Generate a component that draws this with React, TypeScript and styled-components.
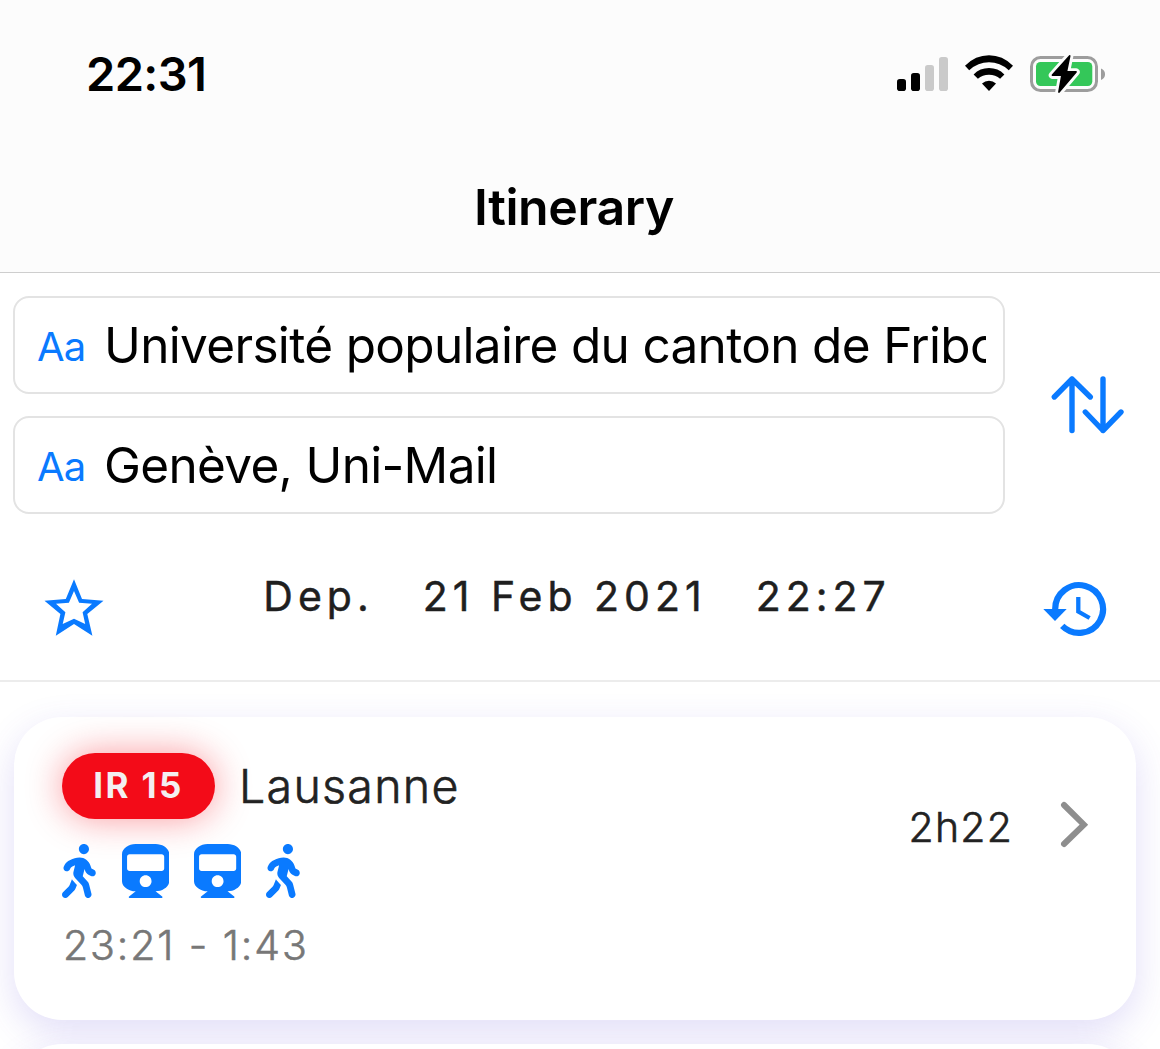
import React from "react";
import styled, { createGlobalStyle } from "styled-components";
import { FaWalking, FaTrain } from "react-icons/fa";

const blue = "#0a7aff";

const GlobalStyle = createGlobalStyle`
  * { box-sizing: border-box; }
  html, body { margin: 0; padding: 0; background: #fff; }
  body { font-family: Inter, "Liberation Sans", sans-serif; color: #000; }
  svg { display: block; flex: none; }
`;

const Screen = styled.div`
  width: 1160px;
  height: 1049px;
  overflow: hidden;
  display: flex;
  flex-direction: column;
  background: #fff;
`;

const Header = styled.header`
  height: 273px;
  flex: none;
  background: #fcfcfc;
  border-bottom: 1px solid #cecece;
`;

const StatusBar = styled.div`
  height: 148px;
  display: flex;
  justify-content: space-between;
  align-items: center;
  padding: 0 53px 0 86px;
`;

const Text = styled.span<{ $size: number; $weight?: number; $spacing?: number; $color?: string; $stroke?: number }>`
  font-size: ${(p) => p.$size}px;
  font-weight: ${(p) => p.$weight ?? 400};
  letter-spacing: ${(p) => p.$spacing ?? 0}px;
  color: ${(p) => p.$color ?? "#000"};
  -webkit-text-stroke: ${(p) => p.$stroke ?? 0}px currentColor;
  line-height: 1.2;
  white-space: pre;
`;

const Title = styled.h1`
  margin: 27px 12px 0 0;
  text-align: center;
  font-size: 50px;
  line-height: 64px;
  font-weight: 600;
  letter-spacing: -0.4px;
`;

const SearchPanel = styled.section`
  height: 409px;
  flex: none;
  padding: 23px 0 0 13px;
  border-bottom: 2px solid #ececec;
`;

const RouteRow = styled.div`
  display: flex;
`;

const Fields = styled.div`
  width: 992px;
  display: flex;
  flex-direction: column;
  gap: 22px;
`;

const Field = styled.div`
  height: 98px;
  border: 2px solid #e3e3e3;
  border-radius: 16px;
  display: flex;
  align-items: center;
  padding: 1px 17px 0 22px;
`;

const FieldMark = styled.span`
  width: 67px;
  flex: none;
  padding-top: 2px;
  color: ${blue};
  font-size: 40px;
  line-height: 48px;
  letter-spacing: -0.8px;
`;

const FieldValue = styled.span`
  flex: 1;
  overflow: hidden;
  white-space: nowrap;
  font-size: 49.5px;
  line-height: 62px;
  padding-bottom: 1px;
  letter-spacing: -0.67px;
`;

const SwapButton = styled.div`
  flex: 1;
  display: flex;
  align-items: center;
  padding-left: 45px;
`;

const TimeRow = styled.div`
  display: flex;
  justify-content: space-between;
  align-items: flex-start;
  padding: 58px 52px 0 30px;
`;

const TimeValues = styled.div`
  display: flex;
  gap: 49px;
  padding-left: 7px;
`;

const IconButton = styled.div<{ $drop: number }>`
  padding-top: ${(p) => p.$drop}px;
`;

const Results = styled.main`
  flex: 1;
  display: flex;
  flex-direction: column;
  gap: 24px;
  padding: 35px 24px 0 14px;
`;

const Card = styled.article`
  height: 303px;
  flex: none;
  border-radius: 48px;
  background: #fff;
  box-shadow: 0 12px 36px rgba(92, 72, 214, 0.18);
  display: flex;
  justify-content: space-between;
  padding: 36px 46px 0 48px;
`;

const Trip = styled.div`
  display: flex;
  flex-direction: column;
`;

const LineRow = styled.div`
  display: flex;
  align-items: center;
  gap: 24px;
  height: 66px;
`;

const Badge = styled.div`
  width: 153px;
  height: 66px;
  border-radius: 33px;
  background: #f30b18;
  box-shadow: 0 0 36px rgba(243, 11, 24, 0.42);
  display: flex;
  align-items: center;
  justify-content: center;
  padding-bottom: 2px;
`;

const Destination = styled(Text)`
  padding-top: 2px;
`;

const Modes = styled.div`
  display: flex;
  gap: 24px;
  margin: 25px 0 23px;
  color: ${blue};
`;

const Mode = styled.div<{ $walk?: boolean }>`
  width: ${(p) => (p.$walk ? 36 : 48)}px;
  svg { width: ${(p) => (p.$walk ? 33.75 : 47.25)}px; height: 54px; }
`;

const Times = styled(Text)`
  padding-left: 1px;
`;

const Summary = styled.div`
  height: 144px;
  display: flex;
  align-items: center;
  gap: 47px;
`;

const Duration = styled(Text)`
  padding-top: 5px;
`;

const StatusIcons = () => (
  <svg width="212" height="42" viewBox="895 53 212 42">
    <rect x="897" y="79" width="9" height="12" rx="2.8" />
    <rect x="911" y="73" width="9" height="18" rx="2.8" />
    <rect x="925" y="65" width="9" height="26" rx="2.8" fill="#cacaca" />
    <rect x="939" y="57" width="9" height="34" rx="2.8" fill="#cacaca" />
    <path d="M965 65.7 Q975.5 55.3 989 55.3 T1013 65.7 L1008.8 70.2 Q1000 62.3 989 62.3 T969.2 70.2 Z" />
    <path d="M973.6 74.4 Q980 68 989 68 T1004.4 74.4 L1000.1 78.8 Q995.5 74.7 989 74.7 T977.9 78.8 Z" />
    <path d="M982 83.5 Q985 80.7 989 80.7 T996 83.5 L989 91 Z" />
    <rect x="1031.5" y="57.5" width="65" height="33" rx="9" fill="none" stroke="#9d9d9d" strokeWidth="3" />
    <rect x="1036" y="62" width="56.3" height="24" rx="4.5" fill="#34c759" />
    <path d="M1101 68.5 Q1105 70 1105 74.2 T1101 80 Z" fill="#9d9d9d" />
    <path d="M1069.6 56 L1052.5 75.2 H1062 L1059 92 L1076 72 H1066.3 Z" fill="#fcfcfc" stroke="#fcfcfc" strokeWidth="7.5" strokeLinejoin="round" />
    <path d="M1069.6 56 L1052.5 75.2 H1062 L1059 92 L1076 72 H1066.3 Z" stroke="#000" strokeWidth="1.8" strokeLinejoin="round" />
  </svg>
);

const SwapIcon = () => (
  <svg width="76" height="60" viewBox="1050 375 76 60" fill="none" stroke={blue} strokeWidth="5.4" strokeLinecap="round" strokeLinejoin="round">
    <path d="M1072 430.5V379M1054.3 397 1072 379 1090.3 397M1103 379V430.5M1085.3 412 1103 430.5 1121 412" />
  </svg>
);

const StarIcon = () => (
  <svg width="62" height="60" viewBox="43 578 62 60">
    <path
      fill={blue}
      fillRule="evenodd"
      d="M74 579.3 82 599 103.5 600.8 87.3 614 92.4 635.8 74 624 55.8 635.8 60.4 614 44.5 600.8 65.8 599ZM74 591 68.9 602.7 56 603.7 65.4 612.3 62.7 624 74 618.7 85.2 624 82.6 612.3 92 603.7 79.1 602.7Z"
    />
  </svg>
);

const HistoryIcon = () => (
  <svg width="66" height="58" viewBox="1042 580 66 58" fill="none" stroke={blue}>
    <path d="M1055.2 609A23.9 23.9 0 1 1 1062.2 625.9" strokeWidth="6.2" />
    <path d="M1043.3 609H1066.7L1055 621Z" fill={blue} stroke="none" />
    <path d="M1078.3 597V611.6L1089.6 618" strokeWidth="4.3" />
  </svg>
);

const ChevronIcon = () => (
  <svg width="30" height="48" viewBox="1060 801 30 48" fill="none" stroke="#8e8e8e" strokeWidth="6" strokeLinecap="round">
    <path d="M1064 805 1083.9 824.7 1064 844" />
  </svg>
);

const App = () => (
  <>
    <GlobalStyle />
    <Screen>
      <Header>
        <StatusBar>
          <Text $size={47} $weight={600} $spacing={-0.6}>22:31</Text>
          <StatusIcons />
        </StatusBar>
        <Title>Itinerary</Title>
      </Header>
      <SearchPanel>
        <RouteRow>
          <Fields>
            <Field>
              <FieldMark>Aa</FieldMark>
              <FieldValue>Université populaire du canton de Fribourg</FieldValue>
            </Field>
            <Field>
              <FieldMark>Aa</FieldMark>
              <FieldValue>Genève, Uni-Mail</FieldValue>
            </Field>
          </Fields>
          <SwapButton>
            <SwapIcon />
          </SwapButton>
        </RouteRow>
        <TimeRow>
          <IconButton $drop={6}>
            <StarIcon />
          </IconButton>
          <TimeValues>
            <Text $size={41} $stroke={0.5} $spacing={5} $color="#1f1f1f">Dep.</Text>
            <Text $size={41} $stroke={0.5} $spacing={5} $color="#1f1f1f">21 Feb 2021</Text>
            <Text $size={41} $stroke={0.5} $spacing={5} $color="#1f1f1f">22:27</Text>
          </TimeValues>
          <IconButton $drop={8}>
            <HistoryIcon />
          </IconButton>
        </TimeRow>
      </SearchPanel>
      <Results>
        <Card>
          <Trip>
            <LineRow>
              <Badge>
                <Text $size={35} $weight={700} $spacing={2.4} $color="#f3eff1">IR 15</Text>
              </Badge>
              <Destination $size={46.5} $weight={300} $stroke={0.6} $spacing={1.3} $color="#222">Lausanne</Destination>
            </LineRow>
            <Modes>
              <Mode $walk><FaWalking /></Mode>
              <Mode><FaTrain /></Mode>
              <Mode><FaTrain /></Mode>
              <Mode $walk><FaWalking /></Mode>
            </Modes>
            <Times $size={41} $weight={300} $stroke={0.6} $spacing={1.9} $color="#777">23:21 - 1:43</Times>
          </Trip>
          <Summary>
            <Duration $size={41} $weight={300} $stroke={0.6} $spacing={1.2} $color="#222">2h22</Duration>
            <ChevronIcon />
          </Summary>
        </Card>
        <Card />
      </Results>
    </Screen>
  </>
);

export default App;
